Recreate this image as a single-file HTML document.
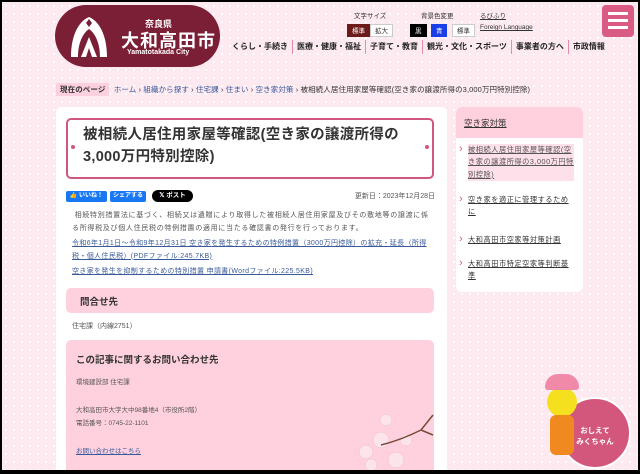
<!DOCTYPE html>
<html><head><meta charset="utf-8"><style>
*{margin:0;padding:0;box-sizing:border-box}
html,body{width:640px;height:474px;overflow:hidden}
body{background:#000;font-family:"Liberation Sans","Noto Sans CJK JP",sans-serif;color:#333;position:relative}
#pg{position:absolute;left:2px;top:2px;width:636px;height:468px;background-color:#fdeaf1;background-image:radial-gradient(#fff 0.8px,transparent 1.2px);background-size:8px 8px;overflow:hidden}
.a{position:absolute}
a{color:#3a5a9a}
.logo{left:53px;top:3px;width:165px;height:62px;background:#7b1f36;border-radius:31px;color:#fff}
.menu{left:600px;top:3px;width:32px;height:32px;background:#d95a82;border-radius:4px}
.menu i{position:absolute;left:6px;width:20px;height:3px;background:#fff}
.nav{top:38px;font-size:8px;color:#222;font-weight:bold}
.nav span{border-left:1px solid #e58aa8;padding:0 4px;display:inline-block;height:14px;line-height:14px}
.small{font-size:6.5px;color:#333}
.btn{display:inline-block;font-size:6.5px;height:13px;line-height:13px;padding:0 4px;border:1px solid #ccc;background:#fff}
.crumb{top:82px;left:54px;font-size:7.5px;color:#333;letter-spacing:0.1px}
.main{left:54px;top:105px;width:391px;height:370px;background:#fff;border-radius:6px}
.side{left:454px;top:105px;width:127px;height:185px;background:#fff;border-radius:6px;overflow:hidden}
.side p{position:absolute;left:12px;font-size:7.2px;line-height:12.3px;color:#333;text-decoration:underline;width:106px;letter-spacing:0.55px}
.side p:before{content:"›";position:absolute;left:-9px;top:-1px;color:#d95a82;font-size:11px;text-decoration:none}
</style></head><body><div id="pg">
<div class="a logo">
 <svg class="a" style="left:12px;top:10px" width="44" height="44" viewBox="0 0 44 44"><path d="M4 42 C4 20 12 6 22 2 C32 6 40 20 40 42 L33 42 C33 28 28 18 22 14 C16 18 11 28 11 42Z" fill="#fff"/><path d="M14 42 L22 22 L30 42 L25 42 L22 33 L19 42Z" fill="#fff"/><path d="M22 4 l3 4 -3 4 -3 -4z" fill="#7b1f36"/></svg>
 <div class="a" style="left:90px;top:12px;font-size:9px;font-weight:bold">奈良県</div>
 <div class="a" style="left:66px;top:22px;font-size:18px;font-weight:bold;letter-spacing:1px">大和高田市</div>
 <div class="a" style="left:72px;top:44px;font-size:7px;font-weight:bold">Yamatotakada City</div>
</div>
<div class="a small" style="left:352px;top:8px">文字サイズ</div>
<div class="a small" style="left:419px;top:8px">背景色変更</div>
<div class="a small" style="left:478px;top:8px;text-decoration:underline">るびふり</div>
<div class="a" style="left:345px;top:18px"><span class="btn" style="background:#6d1a1a;color:#fff;border-color:#6d1a1a">標準</span><span class="btn">拡大</span></div>
<div class="a" style="left:408px;top:18px"><span class="btn" style="background:#000;color:#fff;border-color:#000">黒</span> <span class="btn" style="background:#1a3fe8;color:#fff;border-color:#1a3fe8">青</span> <span class="btn">標準</span></div>
<div class="a small" style="left:478px;top:22px;text-decoration:underline">Foreign Language</div>
<div class="a nav" style="left:226px"><span style="border:none">くらし・手続き</span><span>医療・健康・福祉</span><span>子育て・教育</span><span>観光・文化・スポーツ</span><span>事業者の方へ</span><span>市政情報</span></div>
<div class="a menu"><i style="top:7px"></i><i style="top:14px"></i><i style="top:21px"></i></div>
<div class="a crumb"><span style="background:#fcd0de;padding:2px 4px;font-weight:bold">現在のページ</span> &nbsp;<a>ホーム</a> › <a>組織から探す</a> › <a>住宅課</a> › <a>住まい</a> › <a>空き家対策</a> › 被相続人居住用家屋等確認(空き家の譲渡所得の3,000万円特別控除)</div>
<div class="a main">
 <div class="a" style="left:10px;top:11px;width:368px;height:61px;border:2px solid #d2577f;border-radius:5px"><div class="a" style="left:3px;top:25px;width:4px;height:4px;border-radius:2px;background:#d2577f"></div><div class="a" style="right:3px;top:25px;width:4px;height:4px;border-radius:2px;background:#d2577f"></div>
 <div class="a" style="left:15px;top:4px;font-size:14.5px;line-height:22px;font-weight:bold;color:#333;letter-spacing:0.3px">被相続人居住用家屋等確認(空き家の譲渡所得の<br>3,000万円特別控除)</div></div>
 <div class="a" style="left:10px;top:84px;width:41px;height:11px;background:#1877f2;border-radius:2px;color:#fff;font-size:6px;line-height:11px;text-align:center;font-weight:bold">👍 いいね！</div>
 <div class="a" style="left:54px;top:84px;width:36px;height:11px;background:#1877f2;border-radius:2px;color:#fff;font-size:6px;line-height:11px;text-align:center;font-weight:bold">シェアする</div>
 <div class="a" style="left:96px;top:83px;width:41px;height:12px;background:#000;border-radius:6px;color:#fff;font-size:6.5px;line-height:12px;text-align:center;font-weight:bold">𝕏 ポスト</div>
 <div class="a" style="right:12px;top:84px;font-size:7px;color:#555">更新日：2023年12月28日</div>
 <div class="a" style="left:16px;top:103px;width:362px;font-size:7px;line-height:12.5px;color:#555;letter-spacing:0.7px">&nbsp;相続特別措置法に基づく、相続又は遺贈により取得した被相続人居住用家屋及びその敷地等の譲渡に係る所得税及び個人住民税の特例措置の適用に当たる確認書の発行を行っております。</div>
 <div class="a" style="left:16px;top:131px;width:364px;font-size:7px;line-height:12.5px;letter-spacing:0.35px"><a style="text-decoration:underline">令和6年1月1日～令和9年12月31日 空き家を発生するための特例措置（3000万円控除）の拡充・延長（所得税・個人住民税）(PDFファイル:245.7KB)</a></div>
 <div class="a" style="left:16px;top:159px;font-size:7px;letter-spacing:0.35px"><a style="text-decoration:underline">空き家を発生を抑制するための特別措置 申請書(Wordファイル:225.5KB)</a></div>
 <div class="a" style="left:10px;top:181px;width:368px;height:25px;background:#ffd1df;border-radius:5px;font-size:9.5px;font-weight:bold;padding:6px 14px">問合せ先</div>
 <div class="a" style="left:16px;top:214px;font-size:7px;color:#555">住宅課（内線2751）</div>
 <div class="a" style="left:10px;top:233px;width:368px;height:135px;background:#ffd1df;border-radius:5px">
  <div class="a" style="left:10px;top:12px;font-size:9.5px;font-weight:bold">この記事に関するお問い合わせ先</div>
  <div class="a" style="left:10px;top:36px;font-size:6.5px;color:#555">環境建設部 住宅課</div>
  <div class="a" style="left:10px;top:64px;font-size:6.5px;line-height:13px;color:#555">大和高田市大字大中98番地4（市役所2階）<br>電話番号：0745-22-1101</div>
  <div class="a" style="left:10px;top:105px;font-size:6.5px"><a style="text-decoration:underline">お問い合わせはこちら</a></div>
  <svg class="a" style="left:275px;top:40px" width="93" height="95"><g fill="#fbe4ea" stroke="#f2b8c8" stroke-width=".5"><circle cx="40" cy="60" r="8"/><circle cx="25" cy="72" r="7"/><circle cx="55" cy="80" r="8"/><circle cx="65" cy="60" r="6"/><circle cx="45" cy="40" r="6"/><circle cx="30" cy="85" r="6"/></g><path d="M40 65 Q60 60 80 50 L92 35 M80 50 L92 55" stroke="#7a4a3a" stroke-width="1.5" fill="none"/></svg>
 </div>
</div>
<div class="a side">
 <div style="height:31px;background:#ffd1df;padding:10px 8px;font-size:8.5px;text-decoration:underline;color:#333">空き家対策</div>
 <p style="top:37px;background:#fde0ea;color:#555">被相続人居住用家屋等確認(空き家の譲渡所得の3,000万円特別控除)</p>
 <p style="top:87px">空き家を適正に管理するために</p>
 <p style="top:127px">大和高田市空家等対策計画</p>
 <p style="top:151px">大和高田市特定空家等判断基準</p>
</div>
<div class="a" style="left:557px;top:395px;width:72px;height:72px;border-radius:36px;background:#d3567d;border:2px solid #fff;color:#fff;font-size:7.5px;font-weight:bold;text-align:center;padding-top:26px;line-height:11px">おしえて<br>みくちゃん</div>
<div class="a" style="left:545px;top:385px;width:30px;height:30px;border-radius:15px;background:#f5e020"></div>
<div class="a" style="left:543px;top:372px;width:34px;height:16px;border-radius:17px 17px 4px 4px;background:#f08aa8"></div>
<div class="a" style="left:548px;top:413px;width:24px;height:40px;border-radius:6px;background:#f08a20"></div>
</div></body></html>
